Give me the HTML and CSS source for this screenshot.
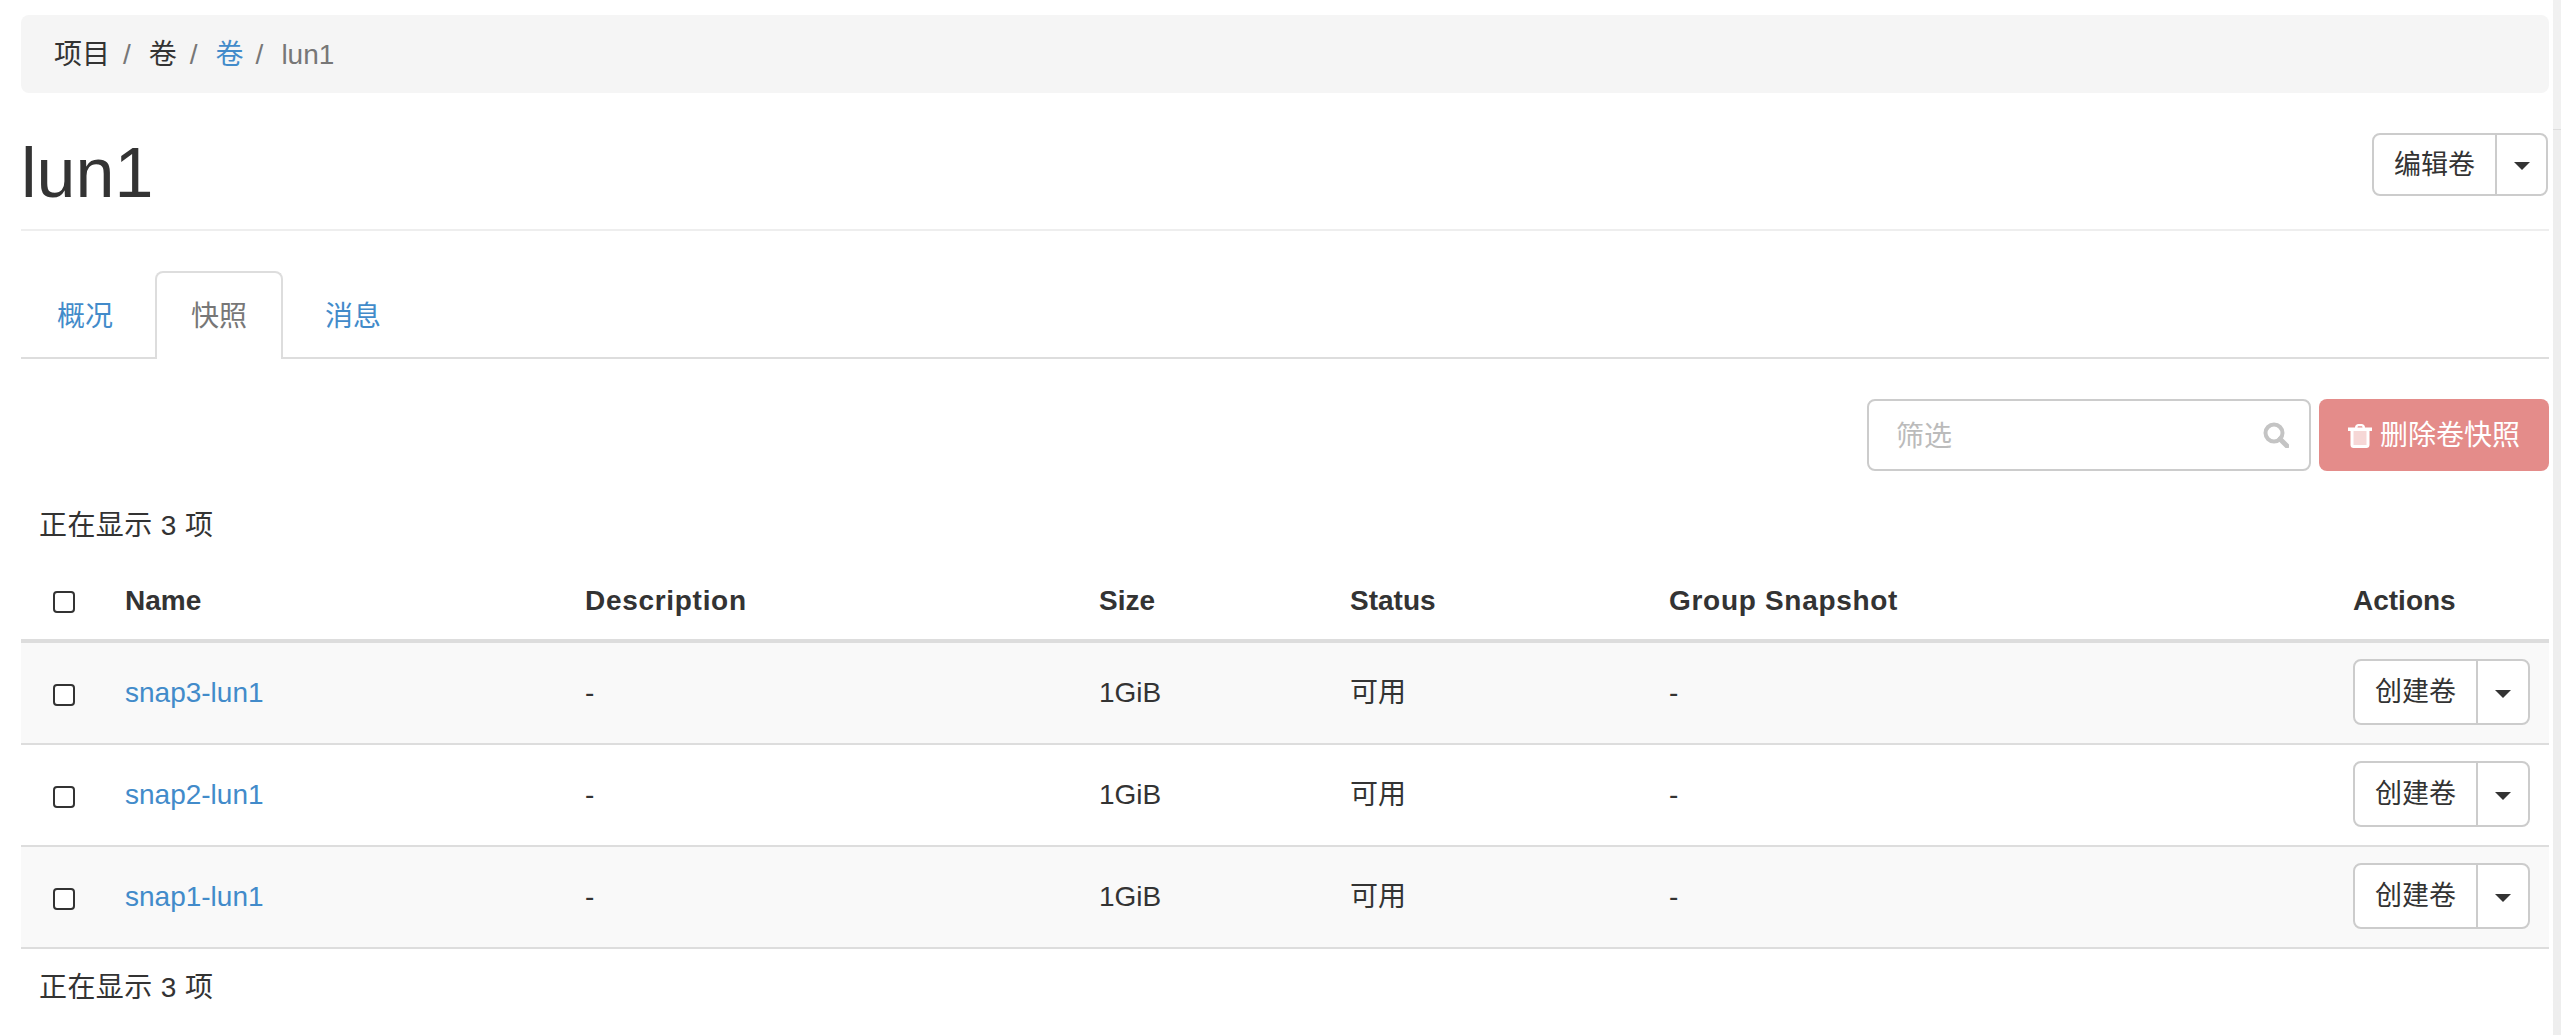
FILE: index.html
```html
<!DOCTYPE html>
<html lang="zh-CN">
<head>
  <meta charset="UTF-8">
  <title>lun1</title>
  <link rel="stylesheet" href="styles.css">
</head>
<body>
  <main class="page">
    <ol class="breadcrumb">
      <li>项目</li>
      <li>卷</li>
      <li><a href="#">卷</a></li>
      <li class="active">lun1</li>
    </ol>

    <div class="page-header">
      <h1>lun1</h1>
      <div class="btn-group btn-group-lg">
        <button class="btn btn-main">编辑卷</button>
        <button class="btn btn-split"><span class="caret"></span></button>
      </div>
    </div>

    <ul class="tabs">
      <li><a href="#">概况</a></li>
      <li class="active"><a href="#">快照</a></li>
      <li><a href="#">消息</a></li>
    </ul>

    <div class="toolbar">
      <div class="filter">
        <span class="placeholder">筛选</span>
        <svg class="search-icon" viewBox="0 0 26 26" width="26" height="26">
          <circle cx="11" cy="11" r="8.5" fill="none" stroke="#c4c4c4" stroke-width="4"/>
          <path d="M17 17l7 7" stroke="#c4c4c4" stroke-width="5" stroke-linecap="round"/>
        </svg>
      </div>
      <button class="btn-delete">
        <svg class="trash-icon" viewBox="0 0 24 24" width="24" height="24">
          <path fill="#fff" fill-opacity="0.65" d="M5 7h14v14H5z"/>
          <path fill="#fff" fill-rule="evenodd" d="M7 3.500C7 1.500 8.500 0 10.500 0h3C15.500 0 17 1.500 17 3.500H24V7H21.500V21c0 1.700-1.300 3-3 3h-13c-1.700 0-3-1.300-3-3V7H0V3.500zM9.500 3.500h5c0-.8-.5-1.200-1.200-1.200h-2.600c-.7 0-1.200.4-1.200 1.200zM5.500 7v14h13V7z"/>
        </svg>
        删除卷快照
      </button>
    </div>

    <div class="count">正在显示 3 项</div>

    <table class="table">
      <thead>
        <tr>
          <th class="col-check"><input type="checkbox"></th>
          <th class="col-name">Name</th>
          <th class="col-desc wide">Description</th>
          <th class="col-size">Size</th>
          <th class="col-status">Status</th>
          <th class="col-group wide">Group Snapshot</th>
          <th>Actions</th>
        </tr>
      </thead>
      <tbody>
        <tr class="odd">
          <td class="col-check"><input type="checkbox"></td>
          <td><a href="#">snap3-lun1</a></td>
          <td>-</td>
          <td>1GiB</td>
          <td>可用</td>
          <td>-</td>
          <td>
            <div class="btn-group">
              <button class="btn btn-main">创建卷</button>
              <button class="btn btn-split"><span class="caret"></span></button>
            </div>
          </td>
        </tr>
        <tr>
          <td class="col-check"><input type="checkbox"></td>
          <td><a href="#">snap2-lun1</a></td>
          <td>-</td>
          <td>1GiB</td>
          <td>可用</td>
          <td>-</td>
          <td>
            <div class="btn-group">
              <button class="btn btn-main">创建卷</button>
              <button class="btn btn-split"><span class="caret"></span></button>
            </div>
          </td>
        </tr>
        <tr class="odd">
          <td class="col-check"><input type="checkbox"></td>
          <td><a href="#">snap1-lun1</a></td>
          <td>-</td>
          <td>1GiB</td>
          <td>可用</td>
          <td>-</td>
          <td>
            <div class="btn-group">
              <button class="btn btn-main">创建卷</button>
              <button class="btn btn-split"><span class="caret"></span></button>
            </div>
          </td>
        </tr>
      </tbody>
    </table>

    <div class="count count-bottom">正在显示 3 项</div>
  </main>
  <div class="scrollbar"><div class="scrollbar-thumb"></div></div>
</body>
</html>
```

FILE: styles.css
```css
html, body {
  height: 100%;
}

body {
  margin: 0;
  display: flex;
  overflow: hidden;
  background-color: #fff;
  color: #333;
  font-family: "Liberation Sans", "Noto Sans CJK SC", sans-serif;
  font-size: 28px;
  line-height: 40px;
}

a {
  color: #428bca;
  text-decoration: none;
}

.page {
  flex: 1;
  min-width: 0;
  padding: 15px 4px 0 21px;
}

.scrollbar {
  flex: none;
  width: 8px;
  background-color: #eee;
}

.scrollbar-thumb {
  height: 129px;
  background-color: #f1f1f1;
  border-bottom: 1px solid #ddd;
}

/* 麵包屑 */
.breadcrumb {
  display: flex;
  align-items: center;
  height: 78px;
  box-sizing: border-box;
  margin: 0;
  padding: 2px 0 0 33px;
  list-style: none;
  background-color: #f5f5f5;
  border-radius: 8px;
}

.breadcrumb li + li::before {
  content: "/";
  margin: 0 18px 0 13px;
  color: #777;
}

.breadcrumb .active {
  margin-left: -1px;
  color: #777;
}

/* 標題 */
.page-header {
  display: flex;
  justify-content: space-between;
  align-items: flex-start;
  margin-top: 40px;
  padding-bottom: 33px;
  border-bottom: 2px solid #eee;
}

.page-header h1 {
  height: 63px;
  margin: 0;
  font-size: 70px;
  font-weight: normal;
  line-height: 80px;
}

/* 按鈕 */
.btn-group {
  display: inline-flex;
  height: 66px;
}

.table .btn-group {
  display: flex;
  margin-bottom: 2px;
}

.btn-group-lg {
  height: 63px;
  margin-right: 1px;
}

.btn {
  margin: 0;
  padding: 0;
  background-color: #fff;
  border: 2px solid #ccc;
  color: #333;
  font: inherit;
  font-size: 27px;
  cursor: pointer;
}

.btn-main {
  width: 125px;
  border-radius: 8px 0 0 8px;
}

.btn-split {
  width: 54px;
  margin-left: -2px;
  border-radius: 0 8px 8px 0;
}

.btn-group-lg .btn-split {
  width: 53px;
}

.caret {
  display: inline-block;
  vertical-align: middle;
  border-top: 8px solid #333;
  border-left: 8px solid transparent;
  border-right: 8px solid transparent;
}

/* 頁籤 */
.tabs {
  display: flex;
  height: 88px;
  box-sizing: border-box;
  margin: 40px 0 0;
  padding: 0;
  list-style: none;
  border-bottom: 2px solid #ddd;
}

.tabs li {
  height: 88px;
  box-sizing: border-box;
  margin-right: 6px;
  border: 2px solid transparent;
  border-bottom: none;
  border-radius: 8px 8px 0 0;
}

.tabs a {
  display: block;
  padding: 24px 34px 20px;
}

.tabs .active {
  background-color: #fff;
  border-color: #ddd;
}

.tabs .active a {
  color: #777;
}

/* 工具列 */
.toolbar {
  display: flex;
  justify-content: flex-end;
  gap: 8px;
  margin-top: 40px;
}

.filter {
  display: flex;
  justify-content: space-between;
  align-items: center;
  width: 444px;
  height: 72px;
  box-sizing: border-box;
  padding: 0 20px 0 27px;
  border: 2px solid #ccc;
  border-radius: 8px;
}

.placeholder {
  padding-top: 3px;
  color: #bbb;
}

.btn-delete {
  display: flex;
  align-items: center;
  justify-content: center;
  gap: 8px;
  width: 230px;
  height: 72px;
  padding: 1px 0 0;
  background-color: #e48c8a;
  border: none;
  border-radius: 8px;
  color: #fff;
  font: inherit;
}

.count {
  margin: 35px 0 15px 18px;
  letter-spacing: 0.4px;
}

.count-bottom {
  margin: 19px 0 0 18px;
}

/* 表格 */
.table {
  width: 100%;
  border-collapse: separate;
  border-spacing: 0;
  table-layout: fixed;
}

.table th {
  height: 76px;
  padding: 2px 18px 0;
  border-bottom: 4px solid #ddd;
  text-align: left;
  font-weight: bold;
}

.table .wide {
  letter-spacing: 0.7px;
}

.table td {
  height: 100px;
  padding: 0 18px;
  border-bottom: 2px solid #ddd;
}

.table .odd td {
  background-color: #f9f9f9;
}

.table .col-check {
  width: 86px;
  box-sizing: border-box;
  padding: 0;
  text-align: center;
}

.col-name {
  width: 460px;
  box-sizing: border-box;
}

.col-desc {
  width: 514px;
  box-sizing: border-box;
}

.col-size {
  width: 251px;
  box-sizing: border-box;
}

.col-status {
  width: 319px;
  box-sizing: border-box;
}

.col-group {
  width: 684px;
  box-sizing: border-box;
}

input[type="checkbox"] {
  appearance: none;
  display: inline-block;
  vertical-align: middle;
  width: 22px;
  height: 22px;
  margin: 0;
  background-color: #fff;
  border: 2px solid #333;
  border-radius: 4px;
}
```
